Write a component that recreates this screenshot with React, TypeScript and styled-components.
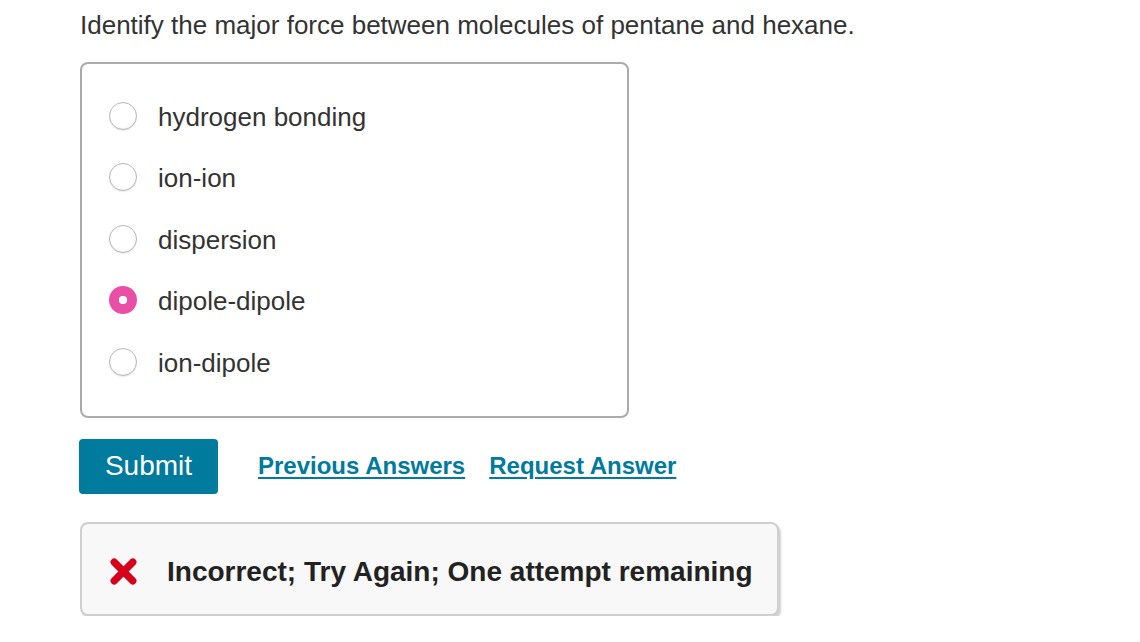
import styled, { createGlobalStyle } from "styled-components";

const GlobalStyle = createGlobalStyle`
  html, body {
    margin: 0;
    padding: 0;
    background: #ffffff;
  }
  body {
    font-family: "Liberation Sans", Arial, Helvetica, sans-serif;
    color: #333333;
  }
`;

const Page = styled.div`
  padding: 7px 0 0 80px;
`;

const Question = styled.p`
  margin: 0;
  font-size: 26px;
  line-height: 36px;
  color: #333333;
`;

const ChoiceBox = styled.div`
  margin-top: 19px;
  width: 549px;
  box-sizing: border-box;
  border: 2px solid #aaaaaa;
  border-radius: 8px;
  padding: 21px 0 23px 27px;
`;

const Option = styled.label`
  display: flex;
  align-items: center;
  height: 61.5px;
  gap: 21px;
  font-size: 26px;
  color: #333333;
  cursor: pointer;
`;

const OptionText = styled.span`
  padding-top: 3px;
`;

const Radio = styled.span<{ $checked?: boolean }>`
  display: inline-block;
  width: 28px;
  height: 28px;
  box-sizing: border-box;
  border-radius: 50%;
  flex-shrink: 0;
  ${(p) =>
    p.$checked
      ? `
    background: radial-gradient(circle, #ffffff 0 4px, #ea4fa8 4.5px);
    border: none;
  `
      : `
    background: #ffffff;
    border: 1px solid #b8b8b8;
    box-shadow: inset 0 -1px 2px rgba(0, 0, 0, 0.06), 0 1px 1px rgba(0, 0, 0, 0.08);
  `}
`;

const Actions = styled.div`
  display: flex;
  align-items: center;
  margin-top: 21px;
  margin-left: -1px;
`;

const SubmitButton = styled.button`
  width: 139px;
  height: 55px;
  border: none;
  border-radius: 4px;
  background: #007a9d;
  color: #ffffff;
  font-family: "Liberation Sans", Arial, sans-serif;
  font-size: 28px;
  padding: 0;
  cursor: pointer;
`;

const LinkText = styled.a<{ $gap: number }>`
  margin-left: ${(p) => p.$gap}px;
  font-size: 24px;
  font-weight: bold;
  color: #007a9d;
  text-decoration: underline;
  text-underline-offset: 3px;
  cursor: pointer;
`;

const Feedback = styled.div`
  margin-top: 28px;
  width: 699px;
  height: 94px;
  box-sizing: border-box;
  display: flex;
  align-items: center;
  padding: 6px 0 0 27px;
  gap: 29px;
  background: #f8f8f8;
  border: 2px solid #cfcfcf;
  border-radius: 8px;
  box-shadow: 2px 3px 2px rgba(0, 0, 0, 0.18);
`;

const FeedbackText = styled.span`
  font-size: 28px;
  font-weight: bold;
  color: #222222;
`;

const CrossIcon = () => (
  <svg width="29" height="29" viewBox="0 0 28 28">
    <path
      d="M5 5 L23 23 M23 5 L5 23"
      stroke="#d7001b"
      strokeWidth="7"
      strokeLinecap="round"
    />
  </svg>
);

const options = [
  "hydrogen bonding",
  "ion-ion",
  "dispersion",
  "dipole-dipole",
  "ion-dipole",
];

export default function App() {
  return (
    <>
      <GlobalStyle />
      <Page>
        <Question>
          Identify the major force between molecules of pentane and hexane.
        </Question>
        <ChoiceBox>
          {options.map((o) => (
            <Option key={o}>
              <Radio $checked={o === "dipole-dipole"} />
              <OptionText>{o}</OptionText>
            </Option>
          ))}
        </ChoiceBox>
        <Actions>
          <SubmitButton>Submit</SubmitButton>
          <LinkText $gap={40}>Previous Answers</LinkText>
          <LinkText $gap={24}>Request Answer</LinkText>
        </Actions>
        <Feedback>
          <CrossIcon />
          <FeedbackText>Incorrect; Try Again; One attempt remaining</FeedbackText>
        </Feedback>
      </Page>
    </>
  );
}
